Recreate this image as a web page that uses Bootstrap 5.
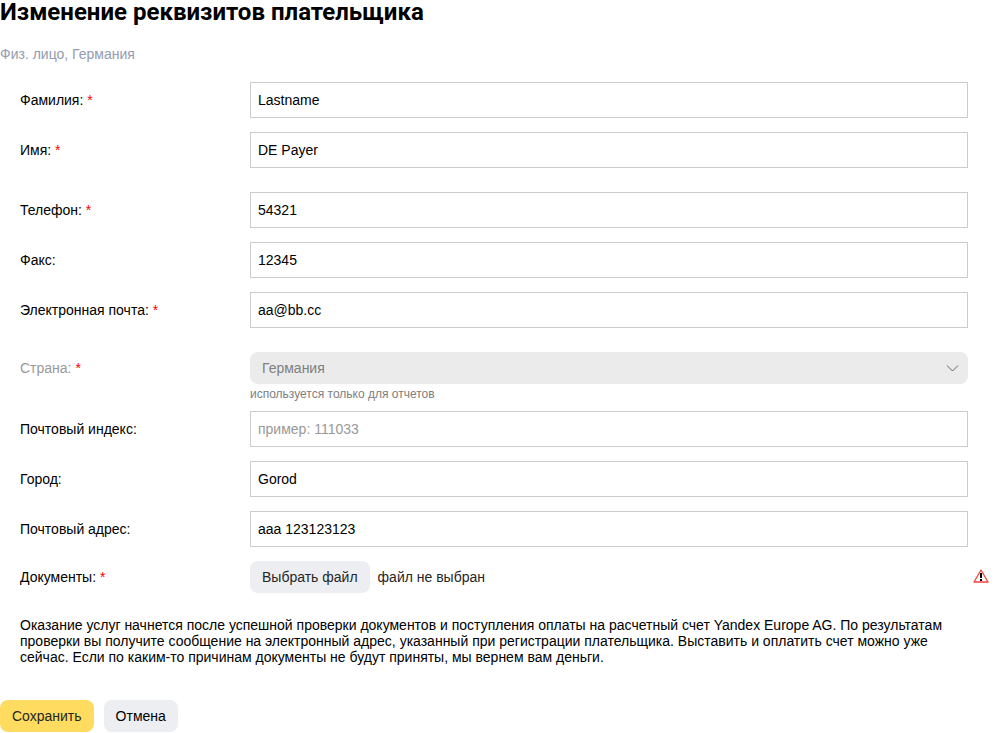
<!DOCTYPE html>
<html lang="ru">
<head>
<meta charset="utf-8">
<meta name="viewport" content="width=device-width, initial-scale=1">
<title>Изменение реквизитов плательщика</title>
<link href="https://cdn.jsdelivr.net/npm/bootstrap@5.3.0/dist/css/bootstrap.min.css" rel="stylesheet">
<style>
body { font: 14px/16px "Liberation Sans", Arial, sans-serif; color: #000; background: #fff; }
.page-title { font: bold 24px/24px Roboto, "Liberation Sans", sans-serif; margin-bottom: 22px; }
.payer-type { color: #939cb0; margin-bottom: 20px; }
.payer-form { padding: 0 32px 0 20px; }
.field-group { display: grid; gap: 14px; margin-bottom: 24px; }
.field-group:last-child { margin-bottom: 0; }
.field-row { display: grid; grid-template-columns: 230px 1fr; align-items: center; }
.req { color: #f00; }
.payer-form .form-control { height: 36px; padding: 0 7px; font-size: 14px; line-height: 16px; color: #000; border: 1px solid #ccc; border-radius: 0; }
.payer-form .form-control::placeholder { color: #999; opacity: 1; }
.select-box { position: relative; }
.select-box .form-select { height: 32px; padding: 0 36px 0 12px; font-size: 14px; line-height: 16px; color: #808080; background: #ebebeb; border: 0; border-radius: 8px; opacity: 1; }
.select-box svg { position: absolute; right: 9px; top: 10px; pointer-events: none; }
.dim { color: #999; }
.hint { grid-column: 2; font-size: 12px; line-height: 13px; color: #808080; padding-top: 4px; margin-bottom: -4px; }
.action { height: 32px; padding: 0 12px; font-size: 14px; line-height: 32px; border: 0; border-radius: 8px; color: #000; background: #edeef2; }
.action:hover { color: #000; background: #e2e4ea; }
.action-file, .file-name { color: #262626; }
.action-save { color: #262626; background: #ffdb5f; }
.action-save:hover { background: #fad14a; }
.warn { position: absolute; right: -21px; top: 8px; }
.notice { margin: 24px 0 0; padding: 0 20px; }
.actions { margin-top: 35px; gap: 10px; }
</style>
</head>
<body>
<main>
  <h1 class="page-title">Изменение реквизитов плательщика</h1>
  <p class="payer-type">Физ. лицо, Германия</p>
  <form>
    <div class="payer-form">
      <div class="field-group">
        <div class="field-row"><label for="lastname">Фамилия: <span class="req">*</span></label><input class="form-control" id="lastname" type="text" value="Lastname"></div>
        <div class="field-row"><label for="firstname">Имя: <span class="req">*</span></label><input class="form-control" id="firstname" type="text" value="DE Payer"></div>
      </div>
      <div class="field-group">
        <div class="field-row"><label for="phone">Телефон: <span class="req">*</span></label><input class="form-control" id="phone" type="tel" value="54321"></div>
        <div class="field-row"><label for="fax">Факс:</label><input class="form-control" id="fax" type="tel" value="12345"></div>
        <div class="field-row"><label for="email">Электронная почта: <span class="req">*</span></label><input class="form-control" id="email" type="email" value="aa@bb.cc"></div>
      </div>
      <div class="field-group">
        <div class="field-row">
          <label class="dim" for="country">Страна: <span class="req">*</span></label>
          <div class="select-box">
            <select class="form-select" id="country" disabled><option>Германия</option></select>
            <svg width="13" height="12" viewBox="0 0 13 12" fill="none" stroke="#666" aria-hidden="true"><path d="M1 3.5 6.5 9 12 3.5"/></svg>
          </div>
          <div class="hint">используется только для отчетов</div>
        </div>
        <div class="field-row"><label for="postcode">Почтовый индекс:</label><input class="form-control" id="postcode" type="text" placeholder="пример: 111033"></div>
        <div class="field-row"><label for="city">Город:</label><input class="form-control" id="city" type="text" value="Gorod"></div>
        <div class="field-row"><label for="address">Почтовый адрес:</label><input class="form-control" id="address" type="text" value="aaa 123123123"></div>
        <div class="field-row">
          <label for="docs">Документы: <span class="req">*</span></label>
          <div class="d-flex align-items-center gap-2 position-relative">
            <input class="visually-hidden" id="docs" type="file">
            <button class="btn action action-file" type="button" onclick="document.getElementById('docs').click()">Выбрать файл</button>
            <span class="file-name">файл не выбран</span>
            <svg class="warn" width="16" height="14" viewBox="0 0 16 14" role="img" aria-label="Обязательное поле"><path d="M8 1 15 13H1Z" fill="#fff" stroke="#f0433a" stroke-width="1.3" stroke-linejoin="round"/><path d="M7 4h2v5H7zM7 10h2v2H7z" fill="#000"/></svg>
          </div>
        </div>
      </div>
    </div>
    <p class="notice">Оказание услуг начнется после успешной проверки документов и поступления оплаты на расчетный счет Yandex Europe AG. По результатам проверки вы получите сообщение на электронный адрес, указанный при регистрации плательщика. Выставить и оплатить счет можно уже сейчас. Если по каким-то причинам документы не будут приняты, мы вернем вам деньги.</p>
    <div class="actions d-flex">
      <button class="btn action action-save" type="submit">Сохранить</button>
      <button class="btn action" type="button">Отмена</button>
    </div>
  </form>
</main>
<script src="https://cdn.jsdelivr.net/npm/bootstrap@5.3.0/dist/js/bootstrap.bundle.min.js"></script>
</body>
</html>
